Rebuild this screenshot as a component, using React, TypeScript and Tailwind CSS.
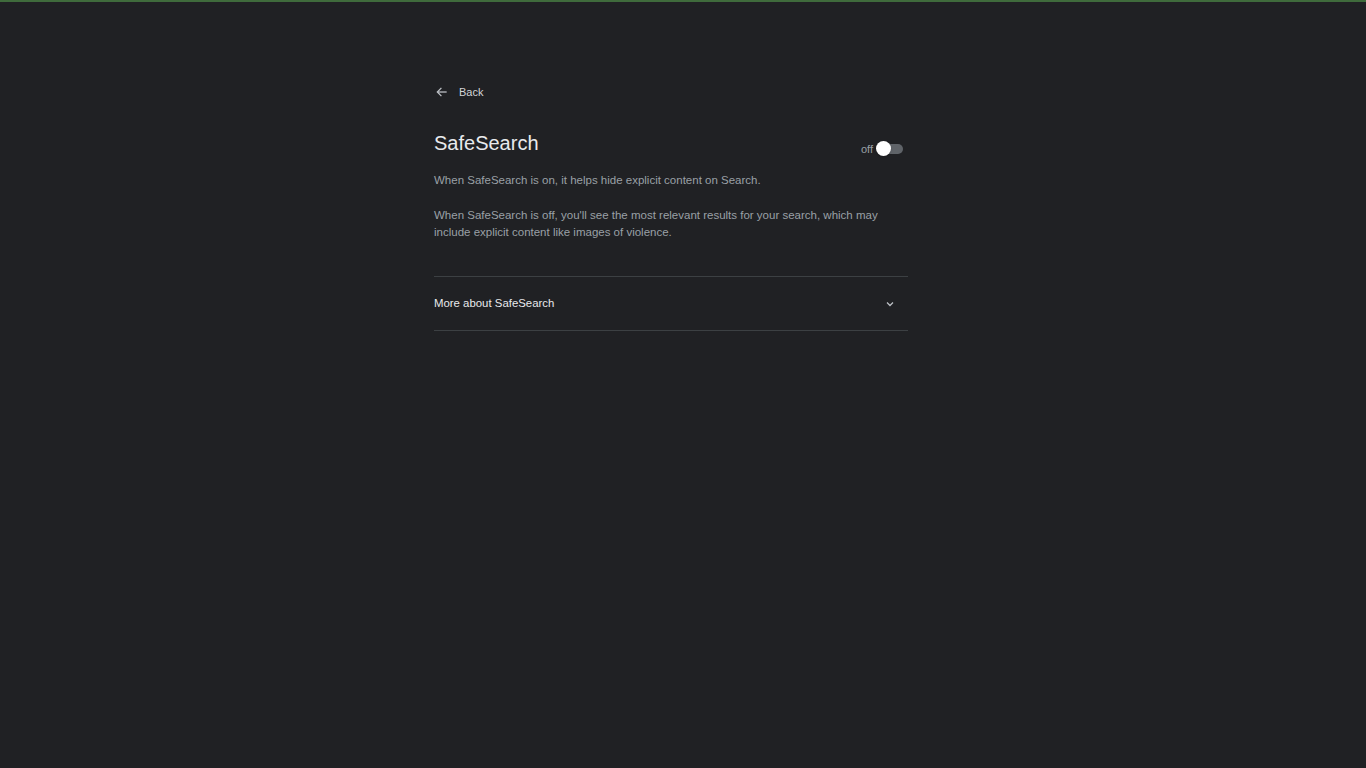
import React from "react";

export default function App() {
  return (
    <div
      className="w-[1366px] h-[768px] bg-[#202124] relative overflow-hidden"
      style={{ fontFamily: '"Liberation Sans", Arial, sans-serif' }}
    >
      <div className="h-[2px] bg-[#3f6b3c]" />
      <div className="ml-[434px] w-[474px] pt-[80px]">
        <div className="flex items-center h-[20px]">
          <svg width="14" height="14" viewBox="0 0 24 24" className="ml-[1px]" fill="none" stroke="#bdc1c6" strokeWidth="2.2">
            <path d="M20 12H5" />
            <path d="M11 5l-7 7 7 7" />
          </svg>
          <span className="ml-[10px] text-[11px] text-[#d2d4d8]">Back</span>
        </div>
        <div className="flex justify-between items-start mt-[28px] h-[26px]">
          <h1 className="text-[20px] leading-[26px] text-[#e8eaed]">SafeSearch</h1>
          <div className="flex items-center mt-[10px] mr-[5px]">
            <span className="text-[11px] text-[#9aa0a6] mr-[4px] mt-[1px]">off</span>
            <div className="relative w-[26px] h-[10px] rounded-full bg-[#5f6368]">
              <div className="absolute left-[-1px] top-[-3px] w-[15px] h-[15px] rounded-full bg-white shadow" />
            </div>
          </div>
        </div>
        <p className="mt-[16px] text-[11.5px] leading-[17px] text-[#9aa0a6]">
          When SafeSearch is on, it helps hide explicit content on Search.
        </p>
        <p className="mt-[18px] text-[11.5px] leading-[17px] text-[#9aa0a6]">
          When SafeSearch is off, you'll see the most relevant results for your search, which may include explicit content like images of violence.
        </p>
        <div className="mt-[35px] border-t border-[#3c4043]" />
        <div className="flex items-center justify-between h-[53px]">
          <span className="text-[11.4px] text-[#e8eaed]">More about SafeSearch</span>
          <svg width="12" height="12" viewBox="0 0 24 24" className="mr-[12px]" fill="none" stroke="#bdc1c6" strokeWidth="2.5">
            <path d="M6 9l6 6 6-6" />
          </svg>
        </div>
        <div className="border-t border-[#3c4043]" />
      </div>
    </div>
  );
}
